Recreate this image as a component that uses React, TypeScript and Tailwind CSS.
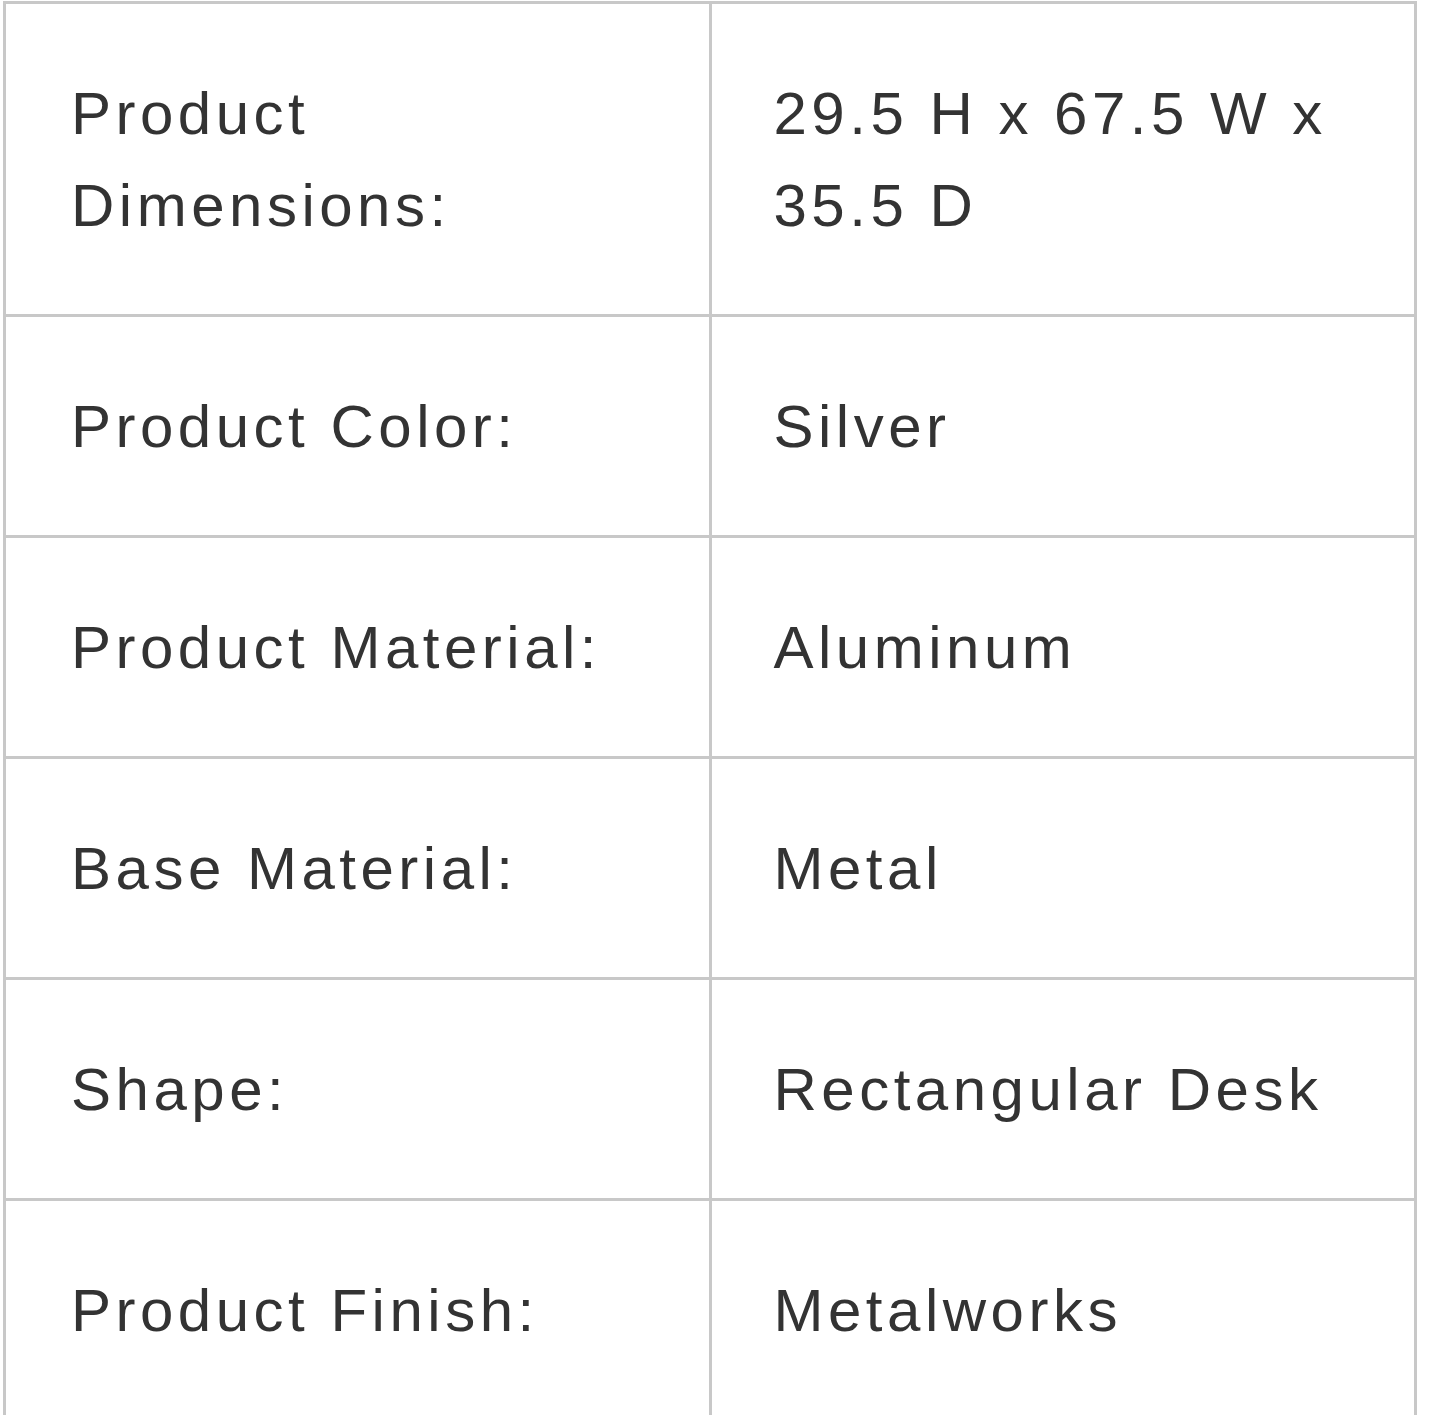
import React from "react";

const rows: [string, string][] = [
  ["Product Dimensions:", "29.5 H x 67.5 W x 35.5 D"],
  ["Product Color:", "Silver"],
  ["Product Material:", "Aluminum"],
  ["Base Material:", "Metal"],
  ["Shape:", "Rectangular Desk"],
  ["Product Finish:", "Metalworks"],
];

export default function App() {
  return (
    <div className="w-[1440px] h-[1415px] overflow-hidden bg-white pt-[1px] pl-[3px]">
      <table
        className="w-[1414px] table-fixed border-collapse text-[60px] leading-[92px] tracking-[4.5px] text-[#333333]"
        style={{ fontFamily: '"Liberation Sans", Arial, sans-serif' }}
      >
        <tbody>
          {rows.map(([k, v], i) => (
            <tr key={i}>
              <td className="w-1/2 border-[3px] border-[#c8c8c8] align-top pl-[65px] pr-[60px] pt-[64px] pb-[62px]">
                {k === "Product Dimensions:" ? (
                  <>
                    Product
                    <br />
                    Dimensions:
                  </>
                ) : (
                  k
                )}
              </td>
              <td className="w-1/2 border-[3px] border-[#c8c8c8] align-top px-[62px] pt-[64px] pb-[62px]">
                {v}
              </td>
            </tr>
          ))}
        </tbody>
      </table>
    </div>
  );
}
